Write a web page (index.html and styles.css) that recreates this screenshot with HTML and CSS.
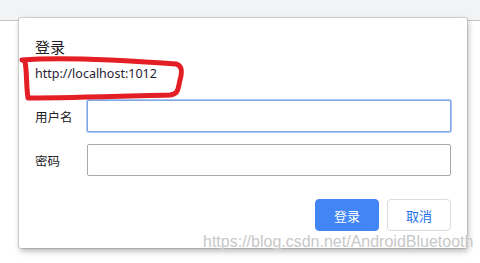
FILE: index.html
```html
<!DOCTYPE html>
<html lang="zh-CN">
<head>
    <meta charset="UTF-8">
    <title>登录</title>
    <link rel="stylesheet" href="styles.css">
</head>
<body>
    <div class="topbar"></div>

    <!-- Login dialog -->
    <div class="dialog">
        <div class="dialog-title">登录</div>
        <div class="dialog-url">http://localhost:1012</div>
        <div class="field">
            <label for="user">用户名</label>
            <input type="text" id="user" class="focused">
        </div>
        <div class="field">
            <label for="pass">密码</label>
            <input type="password" id="pass">
        </div>
        <div class="actions">
            <button class="btn primary">登录</button>
            <button class="btn">取消</button>
        </div>
    </div>

    <!-- Red marker scribble -->
    <svg class="scribble" width="480" height="263" viewBox="0 0 480 263">
        <path d="M22 60 C60 57 120 60 176 64 C183 66 182 73 180 80 C178 88 179 94 170 95 C130 96 70 98 28 98 C26 85 27 70 25 62" fill="none" stroke="#e31e24" stroke-width="5" stroke-linecap="round" stroke-linejoin="round"/>
    </svg>

    <div class="watermark">https://blog.csdn.net/AndroidBluetooth</div>
</body>
</html>
```

FILE: styles.css
```css
body {
    margin: 0;
    background: #fff;
    font-family: "Noto Sans", "Noto Sans CJK SC", sans-serif;
    color: #202124;
}
.topbar {
    height: 20px;
    background: #f1f3f4;
    border-bottom: 1px solid #c8c8c8;
}
.dialog {
    position: absolute;
    left: 19px;
    top: 18px;
    width: 416px;
    height: 198px;
    padding: 18px 16px 14px 16px;
    background: #fff;
    border-radius: 2px;
    box-shadow: 0 0 0 1px rgba(0, 0, 0, 0.12), 1px 3px 6px rgba(0, 0, 0, 0.3);
}
.dialog-title {
    font-size: 15px;
    line-height: 22px;
    font-family: "Noto Sans CJK SC", sans-serif;
}
.dialog-url {
    font-size: 12.5px;
    line-height: 18px;
    margin-top: 7px;
    color: #2a2235;
}
.field {
    display: flex;
    align-items: center;
    margin-top: 17px;
}
.field + .field {
    margin-top: 12px;
}
.field label {
    width: 52px;
    font-size: 12.5px;
    font-family: "Noto Sans CJK SC", sans-serif;
}
.field input {
    flex: 1;
    height: 32px;
    box-sizing: border-box;
    border: 1px solid #a9a9a9;
    border-radius: 2px;
    outline: none;
}
.field input.focused {
    border-color: #7fa6e6;
    box-shadow: 0 0 0 1px #a9c4f0;
}
.actions {
    display: flex;
    justify-content: flex-end;
    gap: 8px;
    margin-top: 23px;
}
.btn {
    width: 64px;
    height: 32px;
    border: 1px solid #dadce0;
    border-radius: 4px;
    background: #fff;
    color: #1a73e8;
    font-size: 13px;
    font-family: "Noto Sans CJK SC", sans-serif;
}
.btn.primary {
    background: #4285f4;
    border-color: #4285f4;
    color: #fff;
}
.scribble {
    position: absolute;
    left: 0;
    top: 0;
}
.watermark {
    position: absolute;
    left: 203px;
    top: 233px;
    font-family: "Liberation Sans", sans-serif;
    font-size: 16px;
    color: #c8c8c8;
    text-shadow: 0 0 2px #fff;
    white-space: nowrap;
}
```
